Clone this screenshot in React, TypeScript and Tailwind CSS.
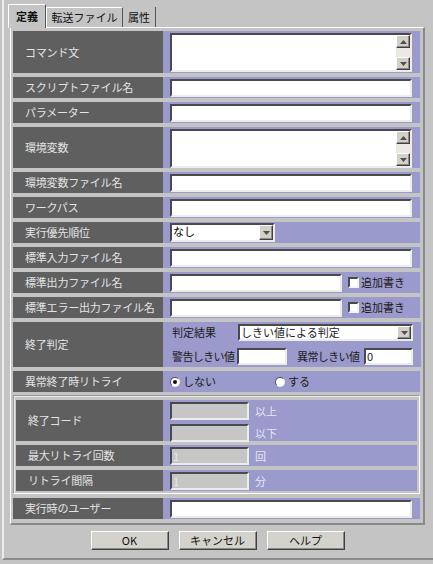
import type { ReactNode } from "react";

const inset =
  "border-2 border-t-[#4a4a4a] border-l-[#4a4a4a] border-r-[#ececec] border-b-[#ececec]";
const raised =
  "border border-t-white border-l-white border-r-[#404040] border-b-[#404040] shadow-[inset_-1px_-1px_0_#8a8a8a]";

function Arrow({ down }: { down?: boolean }) {
  return (
    <svg width="7" height="4" viewBox="0 0 7 4">
      <path d={down ? "M0 0h7L3.5 4z" : "M0 4h7L3.5 0z"} fill="#505050" />
    </svg>
  );
}

function Row({
  label,
  h,
  labelW = "w-[150px]",
  children,
}: {
  label: string;
  h: string;
  labelW?: string;
  children?: ReactNode;
}) {
  return (
    <div className={`flex ${h}`}>
      <div
        className={`${labelW} shrink-0 bg-[#5f5f5f] text-[#e4e4e4] flex items-center pl-[12px] text-[11px] tracking-[-0.2px] whitespace-nowrap`}
      >
        {label}
      </div>
      <div className="flex-1 bg-[#9a9acc] pl-[7px] pr-[8px]">{children}</div>
    </div>
  );
}

function TextBox({ className = "", value }: { className?: string; value?: string }) {
  return (
    <div className={`${inset} bg-white h-[18px] mt-[2px] text-[11px] leading-[14px] pl-[1px] ${className}`}>
      {value}
    </div>
  );
}

function TextArea() {
  return (
    <div className={`${inset} bg-white h-[39px] mt-[2px] flex justify-end`}>
      <div className="w-[14px] flex flex-col">
        <div className={`${raised} h-[13px] bg-[#d4d0c8] flex items-center justify-center`}>
          <Arrow />
        </div>
        <div className="flex-1 bg-[#ebe9e4]" />
        <div className={`${raised} h-[13px] bg-[#d4d0c8] flex items-center justify-center`}>
          <Arrow down />
        </div>
      </div>
    </div>
  );
}

function Select({ text, className }: { text: string; className: string }) {
  return (
    <div className={`${inset} bg-white flex items-stretch text-[11px] ${className}`}>
      <div className="flex-1 pl-[1px] leading-[13px]">{text}</div>
      <div className={`${raised} w-[14px] bg-[#d4d0c8] flex items-center justify-center`}>
        <Arrow down />
      </div>
    </div>
  );
}

function Check({ label }: { label: string }) {
  return (
    <div className="flex items-center ml-[6px] text-[11px] text-[#1a1a1a] whitespace-nowrap">
      <div className={`${inset} border-r-[#f4f4f4] border-b-[#f4f4f4] bg-white w-[11px] h-[11px]`} />
      <span className="ml-[2px]">{label}</span>
    </div>
  );
}

function Radio({ on, label, className = "" }: { on?: boolean; label: string; className?: string }) {
  return (
    <div className={`flex items-center text-[11px] text-[#1a1a1a] ${className}`}>
      <div className="w-[10px] h-[10px] rounded-full bg-white border border-t-[#505050] border-l-[#505050] border-r-[#f0f0f0] border-b-[#f0f0f0] flex items-center justify-center">
        {on && <div className="w-[4px] h-[4px] rounded-full bg-[#111]" />}
      </div>
      <span className="ml-[3px]">{label}</span>
    </div>
  );
}

function Disabled({ value, unit, className = "" }: { value?: string; unit: string; className?: string }) {
  return (
    <div className={`flex items-center ${className}`}>
      <div className={`${inset} bg-[#c6c6c6] w-[79px] h-[18px] text-[11px] leading-[14px] pl-[1px] text-[#e8e8e8]`}>
        {value}
      </div>
      <span className="ml-[6px] text-[11px] text-[#e6e6f4]">{unit}</span>
    </div>
  );
}

function Button({ label }: { label: string }) {
  return (
    <div className={`${raised} w-[78px] h-[19px] bg-[#d4d2cc] flex items-center justify-center text-[11px] text-[#111]`}>
      {label}
    </div>
  );
}

export default function App() {
  return (
    <div className="w-[433px] h-[564px] bg-[#c4c4c4] pl-[2px] font-['Noto_Sans_CJK_JP','Noto_Sans',sans-serif]">
      <div className="h-[560px] border-l-2 border-l-[#ececec] border-b-2 border-b-[#8c8c8c] pr-[6px]">
        {/* tabs */}
        <div className="flex items-end h-[27px] pl-[4px] pt-[4px] text-[11px] text-[#111]">
          <div className="relative z-10 w-[38px] h-[24px] -mb-px bg-[#c4c4c4] border-t border-l border-t-white border-l-white border-r border-r-[#555] flex items-center justify-center font-bold">
            定義
          </div>
          <div className="w-[77px] h-[20px] border-t border-l border-t-white border-l-white border-r border-r-[#555] flex items-center justify-center">
            転送ファイル
          </div>
          <div className="w-[33px] h-[20px] border-r border-r-[#555] flex items-center justify-center">
            属性
          </div>
        </div>

        {/* panel */}
        <div className="ml-[6px] w-[415px] border-t border-l border-t-white border-l-white border-r-2 border-r-[#8a8a8a] border-b-2 border-b-[#8a8a8a] pl-[2px] pr-[3px] pt-[3px] pb-[4px] flex flex-col gap-[4px]">
          <Row label="コマンド文" h="h-[42px]">
            <TextArea />
          </Row>
          <Row label="スクリプトファイル名" h="h-[21px]">
            <TextBox />
          </Row>
          <Row label="パラメーター" h="h-[21px]">
            <TextBox />
          </Row>
          <Row label="環境変数" h="h-[41px]">
            <TextArea />
          </Row>
          <Row label="環境変数ファイル名" h="h-[21px]">
            <TextBox />
          </Row>
          <Row label="ワークパス" h="h-[21px]">
            <TextBox />
          </Row>
          <Row label="実行優先順位" h="h-[21px]">
            <Select text="なし" className="w-[105px] h-[19px] mt-px" />
          </Row>
          <Row label="標準入力ファイル名" h="h-[21px]">
            <TextBox />
          </Row>
          <Row label="標準出力ファイル名" h="h-[21px]">
            <div className="flex items-center">
              <TextBox className="w-[172px]" />
              <Check label="追加書き" />
            </div>
          </Row>
          <Row label="標準エラー出力ファイル名" h="h-[21px]">
            <div className="flex items-center">
              <TextBox className="w-[172px]" />
              <Check label="追加書き" />
            </div>
          </Row>
          <Row label="終了判定" h="h-[45px]">
            <div className="flex flex-col pl-[2px] pt-[2px] gap-[7px] text-[11px] text-[#1a1a1a]">
              <div className="flex items-center">
                <span className="w-[66px]">判定結果</span>
                <Select text="しきい値による判定" className="w-[175px] h-[17px]" />
              </div>
              <div className="flex items-center">
                <span className="w-[65px] whitespace-nowrap tracking-[-0.6px]">警告しきい値</span>
                <div className={`${inset} bg-white w-[50px] h-[17px]`} />
                <span className="ml-[10px] w-[67px] whitespace-nowrap tracking-[-0.6px]">異常しきい値</span>
                <div className={`${inset} bg-white w-[49px] h-[17px] leading-[13px] pl-[1px]`}>0</div>
              </div>
            </div>
          </Row>
          <Row label="異常終了時リトライ" h="h-[21px]">
            <div className="flex items-center h-full">
              <Radio on label="しない" className="w-[105px]" />
              <Radio label="する" />
            </div>
          </Row>

          {/* retry group */}
          <div className="border border-t-[#9a9a9a] border-l-[#9a9a9a] border-r-white border-b-white shadow-[inset_1px_1px_0_#e8e8e8] p-[2px] pt-[4px] -mt-[1px] flex flex-col gap-[4px]">
            <Row label="終了コード" h="h-[41px]" labelW="w-[147px]">
              <div className="flex flex-col gap-[4px]">
                <Disabled unit="以上" className="mt-[2px]" />
                <Disabled unit="以下" />
              </div>
            </Row>
            <Row label="最大リトライ回数" h="h-[21px]" labelW="w-[147px]">
              <Disabled value="1" unit="回" className="mt-[2px]" />
            </Row>
            <Row label="リトライ間隔" h="h-[21px]" labelW="w-[147px]">
              <Disabled value="1" unit="分" className="mt-[2px]" />
            </Row>
          </div>

          <Row label="実行時のユーザー" h="h-[21px]">
            <TextBox />
          </Row>
        </div>

        {/* buttons */}
        <div className="flex justify-center gap-[10px] mt-[6px] pl-[4px]">
          <Button label="OK" />
          <Button label="キャンセル" />
          <Button label="ヘルプ" />
        </div>
      </div>
    </div>
  );
}
